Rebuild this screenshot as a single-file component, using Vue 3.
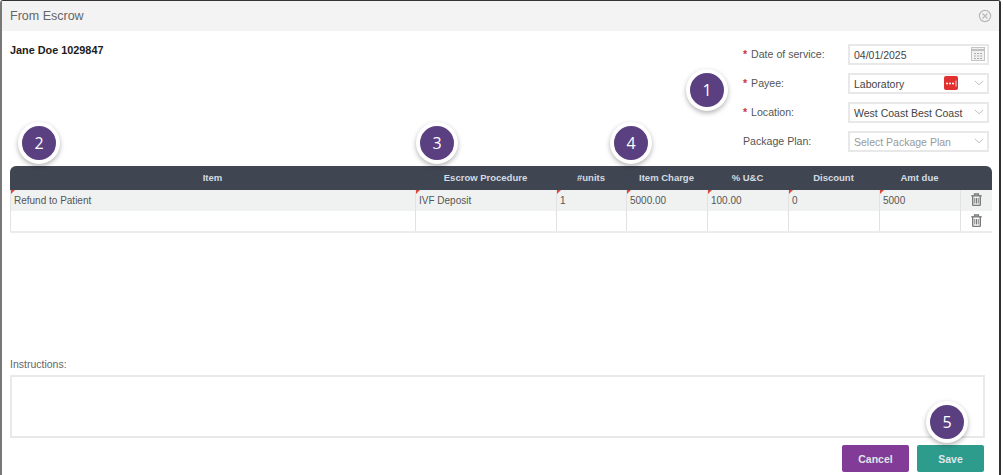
<script setup>
const rows = [
  { cells: ['Refund to Patient', 'IVF Deposit', '1', '5000.00', '100.00', '0', '5000'], flagged: true },
  { cells: ['', '', '', '', '', '', ''], flagged: false }
]
const headers = ['Item', 'Escrow Procedure', '#units', 'Item Charge', '% U&C', 'Discount', 'Amt due', '']
const badges = [
  { n: 1, cls: 'b1' }, { n: 2, cls: 'b2' }, { n: 3, cls: 'b3' }, { n: 4, cls: 'b4' }, { n: 5, cls: 'b5' }
]
</script>

<template>
  <div class="page">
    <div class="modal">
      <header class="head">
        <span class="title">From Escrow</span>
        <svg class="close" width="14" height="14" viewBox="0 0 14 14" fill="none" stroke="#b8b8b8" stroke-width="1.2">
          <circle cx="7" cy="7" r="5.6" />
          <path d="M4.5 4.5l5 5M9.5 4.5l-5 5" />
        </svg>
      </header>

      <section class="top">
        <div class="patient">Jane Doe 1029847</div>
        <div class="form">
          <label class="lbl"><i>*</i> Date of service:</label>
          <div class="field">
            <span>04/01/2025</span>
            <svg class="cal" width="14" height="14" viewBox="0 0 14 14" fill="none" stroke="#c4c4c4">
              <rect x="0.5" y="0.5" width="13" height="13" fill="#f1f1f1" />
              <path d="M0.5 3h13" stroke="#b0b0b0" stroke-width="1.5" />
              <path d="M3 6.5h2M6 6.5h2M9 6.5h2M3 9h2M6 9h2M9 9h2M3 11.5h2M6 11.5h2M9 11.5h2" stroke="#adadad" />
            </svg>
          </div>
          <label class="lbl"><i>*</i> Payee:</label>
          <div class="field">
            <span>Laboratory</span>
            <svg class="dots" width="14" height="14" viewBox="0 0 14 14">
              <rect width="14" height="14" rx="2" fill="#e0302f" />
              <circle cx="3" cy="7.5" r="1" fill="#fff" />
              <circle cx="6" cy="7.5" r="1" fill="#fff" />
              <circle cx="9" cy="7.5" r="1" fill="#fff" />
              <path d="M12 4.5v6" stroke="#fff" stroke-width="0.8" />
            </svg>
            <svg class="chev" width="10" height="6" viewBox="0 0 12 7" fill="none" stroke="#b5b5b5"><path d="M1 1l5 4.6L11 1" /></svg>
          </div>
          <label class="lbl"><i>*</i> Location:</label>
          <div class="field">
            <span>West Coast Best Coast</span>
            <svg class="chev" width="10" height="6" viewBox="0 0 12 7" fill="none" stroke="#b5b5b5"><path d="M1 1l5 4.6L11 1" /></svg>
          </div>
          <label class="lbl">Package Plan:</label>
          <div class="field placeholder">
            <span>Select Package Plan</span>
            <svg class="chev" width="10" height="6" viewBox="0 0 12 7" fill="none" stroke="#b5b5b5"><path d="M1 1l5 4.6L11 1" /></svg>
          </div>
        </div>
      </section>

      <section class="table">
        <div class="thead">
          <div v-for="h in headers" :key="h" class="th">{{ h }}</div>
        </div>
        <div v-for="(r, i) in rows" :key="i" class="tr" :class="{ shaded: i === 0 }">
          <div v-for="(c, j) in r.cells" :key="j" class="td" :class="{ flag: r.flagged }">{{ c }}</div>
          <div class="td act">
            <svg width="11" height="13" viewBox="0 0 11 13" fill="none" stroke="#7a7a7a" stroke-width="1.4">
              <path d="M0.3 2.8h10.4" />
              <path d="M3.6 2.5V1h3.8v1.5" />
              <path d="M1.7 3v8.6c0 .5.3.8.8.8h6c.5 0 .8-.3.8-.8V3" />
              <path d="M3.8 5v5.5M5.5 5v5.5M7.2 5v5.5" stroke-width="1" />
            </svg>
          </div>
        </div>
      </section>

      <section class="notes">
        <div class="notes-label">Instructions:</div>
        <div class="textarea"></div>
      </section>

      <footer class="foot">
        <button class="btn cancel">Cancel</button>
        <button class="btn save">Save</button>
      </footer>
    </div>

    <div v-for="b in badges" :key="b.n" class="badge" :class="b.cls">{{ b.n }}</div>
  </div>
</template>

<style>
html, body { margin: 0; background: #fff; overflow: hidden; }
</style>

<style scoped>
.page {
  position: relative;
  width: 1003px;
  height: 475px;
  overflow: hidden;
  background: #fff;
  font-family: "Liberation Sans", Arial, sans-serif;
  font-size: 10.5px;
  color: #555;
}
.modal {
  width: 1001px;
  height: 475px;
  box-sizing: border-box;
  background: #fff;
  border-top: 1px solid #333;
  border-left: 2px solid #777;
  border-right: 2px solid #2f2f2f;
  border-radius: 3px 3px 0 0;
  display: flex;
  flex-direction: column;
}
.head {
  height: 30px;
  flex: none;
  background: #f3f3f3;
  display: flex;
  align-items: center;
  justify-content: space-between;
  padding: 0 7px 0 8px;
}
.title { font-size: 12.5px; color: #666; }
.top {
  height: 135px;
  flex: none;
  display: flex;
  justify-content: space-between;
  padding: 13px 10px 0 8px;
  box-sizing: border-box;
}
.patient { font-weight: 700; font-size: 10.85px; color: #1c1c1c; }
.form {
  display: grid;
  grid-template-columns: 105px 141px;
  grid-auto-rows: 21px;
  row-gap: 8px;
  align-items: center;
}
.lbl { color: #555; font-size: 10.6px; padding-bottom: 2px; }
.lbl i { color: #d0323a; font-style: normal; font-weight: 700; margin-right: 1px; }
.field {
  position: relative;
  height: 21px;
  box-sizing: border-box;
  border: 2px solid #e8e8e8;
  display: flex;
  align-items: center;
  padding: 0 4px;
  color: #444;
}
.placeholder { color: #999; }
.cal { position: absolute; right: 2px; top: 1px; }
.dots { position: absolute; right: 29px; top: 1px; }
.chev { position: absolute; right: 3px; top: 5px; }
.table { margin: 0 7px 0 8px; flex: none; }
.thead {
  display: grid;
  grid-template-columns: 405px 141px 70px 81px 81px 91px 81px 32px;
  height: 24px;
  background: #3f4652;
  border-radius: 6px 6px 0 0;
}
.th {
  color: #d5dbe2;
  font-size: 9.5px;
  font-weight: 700;
  display: flex;
  align-items: center;
  justify-content: center;
  padding-bottom: 2px;
}
.tr {
  display: grid;
  grid-template-columns: 405px 141px 70px 81px 81px 91px 81px 32px;
  height: 21px;
  box-sizing: border-box;
}
.tr:last-child { height: 22px; border-bottom: 2px solid #ececec; }
.shaded { background: #f0f2f1; }
.td {
  position: relative;
  border-left: 1px solid #e2e2e2;
  box-sizing: border-box;
  padding: 5px 3px 0 3px;
  font-size: 10px;
  color: #555;
  white-space: nowrap;
}
.flag::before {
  content: "";
  position: absolute;
  left: 0;
  top: 0;
  border-top: 4px solid #e2483a;
  border-right: 4px solid transparent;
}
.act {
  padding: 3px 0 0 10px;
}
.notes { margin-top: auto; padding: 0 14px 0 8px; flex: none; }
.notes-label { font-size: 10.5px; color: #666; margin-bottom: 5px; }
.textarea {
  height: 63px;
  box-sizing: border-box;
  border: 2px solid #e9e9e9;
}
.foot {
  flex: none;
  display: flex;
  justify-content: flex-end;
  gap: 8px;
  padding: 7px 15px 3px 0;
}
.btn {
  width: 67px;
  height: 27px;
  border: none;
  border-radius: 2px;
  font-family: inherit;
  font-size: 10.5px;
  font-weight: 700;
  color: #dfe6ea;
}
.cancel { background: #823c97; }
.save { background: #2e9c8c; }
.badge {
  position: absolute;
  width: 34px;
  height: 34px;
  box-sizing: content-box;
  border: 4px solid #fff;
  border-radius: 50%;
  background: #5a4080;
  color: #fff;
  font-size: 16px;
  font-family: "Open Sans", "Liberation Sans", sans-serif;
  display: flex;
  align-items: center;
  justify-content: center;
  box-shadow: 0 2px 5px rgba(0, 0, 0, 0.3);
}
.b1 { left: 686px; top: 69px; }
.b2 { left: 18px; top: 122px; }
.b3 { left: 416px; top: 122px; }
.b4 { left: 610px; top: 122px; }
.b5 { left: 926px; top: 401px; }
</style>
